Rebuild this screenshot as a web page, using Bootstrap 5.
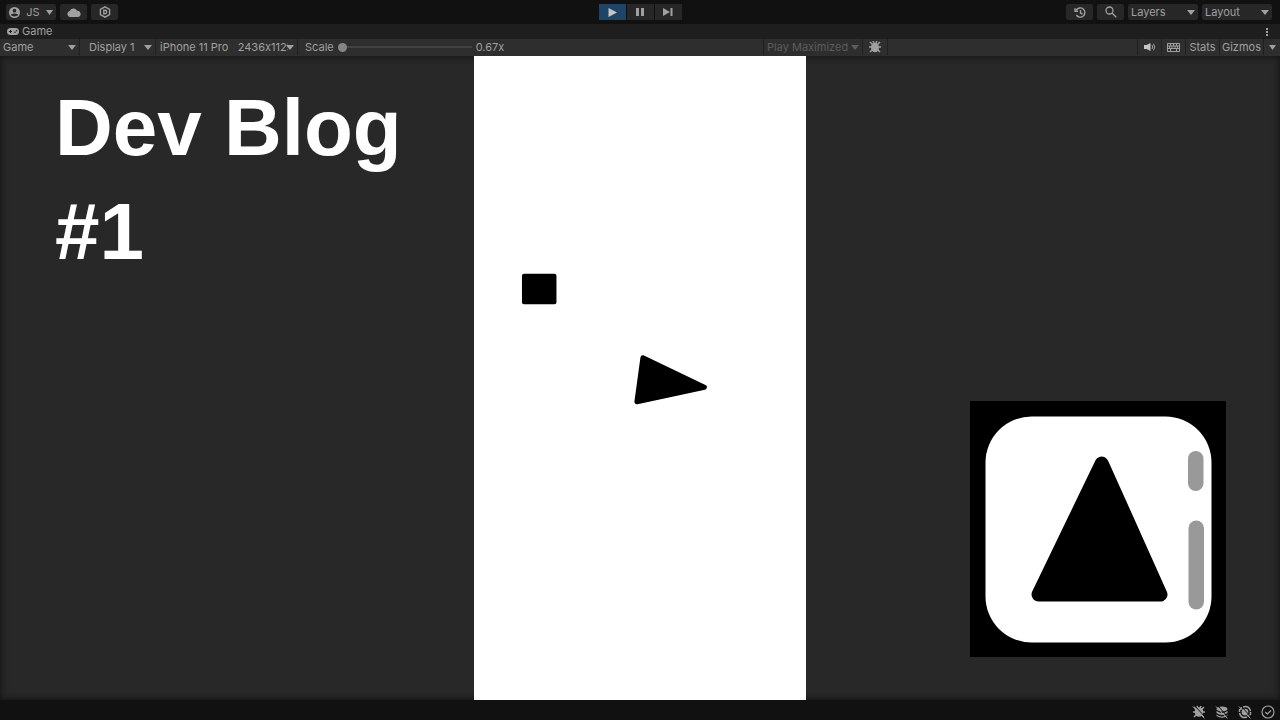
<!DOCTYPE html>
<html lang="en" data-bs-theme="dark">
<head>
<meta charset="utf-8">
<meta name="viewport" content="width=device-width, initial-scale=1">
<title>Dev Blog #1</title>
<link href="https://cdn.jsdelivr.net/npm/bootstrap@5.3.0/dist/css/bootstrap.min.css" rel="stylesheet">
<style>
  :root { --ink: #a0a0a0; --panel: #2e2e2e; --line: #202020; }
  body { font-family: Inter, "Liberation Sans", sans-serif; font-size: 11px; font-variant-ligatures: no-contextual; line-height: 16px; color: var(--ink); background: #111; }
  svg { display: block; }
  .topbar { display: grid; grid-template-columns: 1fr auto 1fr; height: 24px; padding: 0 8px 0 6px; background: #111; }
  .tool { display: flex; align-items: center; justify-content: center; height: 16px; width: 27px; padding: 0; border: 0; border-radius: 2px; background: #272727; color: var(--ink); font-size: 11px; line-height: 16px; }
  .tool:hover { background: #3a3a3a; color: #ddd; }
  .tool.account { width: 50px; gap: 6px; }
  .playback { gap: 1px; padding-left: 2px; }
  .playback .tool { border-radius: 0; }
  .playback .tool.running { background: #1f4466; color: #c4c4c4; }
  .pick { appearance: none; height: 16px; border: 0; border-radius: 2px; color: var(--ink); font: inherit; font-variant-ligatures: no-contextual; line-height: 16px; padding: 0 14px 0 3px;
    background: #272727 url("data:image/svg+xml,%3Csvg xmlns='http://www.w3.org/2000/svg' width='8' height='5'%3E%3Cpath d='M0 0h8L4 5z' fill='%23a0a0a0'/%3E%3C/svg%3E") no-repeat right 3px center; }
  .topbar .pick { width: 70px; }
  .tabs { height: 15px; background: #1e1e1e; }
  .tabs .title { line-height: 15px; gap: 3px; padding-left: 7px; }
  .bare { border: 0; background: none; color: inherit; padding: 0; font: inherit; }
  .gamebar { height: 17px; padding-bottom: 1px; background: var(--panel); }
  .gamebar > *, .gamebar .cell { height: 16px; }
  .gamebar .pick { background-color: var(--panel); border-radius: 0; border-right: 1px solid var(--line); }
  .gamebar .pick.muted { border-left: 1px solid var(--line); width: 100px; color: #5c5c5c; opacity: 1;
    background-image: url("data:image/svg+xml,%3Csvg xmlns='http://www.w3.org/2000/svg' width='8' height='5'%3E%3Cpath d='M0 0h8L4 5z' fill='%235c5c5c'/%3E%3C/svg%3E"); }
  .gamebar .w-view { width: 80px; }
  .gamebar .w-display { width: 76px; padding-left: 9px; }
  .gamebar .w-device { width: 142px; padding-left: 4px; padding-right: 9px; background-position-x: right 2px; }
  .zoomer { width: 216px; padding-left: 7px; }
  .zoomer input { appearance: none; width: 134px; height: 10px; margin: 0 4px; background: linear-gradient(#424242, #424242) center / 100% 2px no-repeat; }
  .zoomer input::-webkit-slider-thumb { appearance: none; width: 9px; height: 9px; border-radius: 50%; background: #858585; }
  .zoomer input::-moz-range-thumb { width: 9px; height: 9px; border: 0; border-radius: 50%; background: #858585; }
  .cell { display: flex; align-items: center; justify-content: center; border-left: 1px solid var(--line); }
  .w-icon { width: 24px; } .w-stats { width: 34px; } .w-gizmos { width: 44px; } .w-caret { width: 17px; }
  .stage { display: grid; grid-template-columns: 37fr 26fr 37fr; background: #282828; box-shadow: inset 0 0 6px 1px #141414; }
  .headline { font: bold 80px/104px "Liberation Sans", Arial, sans-serif; color: #fff; padding: 20px 0 0 55px; margin: 0; }
  .screen { background: #fff; }
  .screen svg { width: 100%; height: auto; }
  .app-logo { width: 256px; margin: 0 54px 43px 0; }
  .status { height: 20px; padding: 3px 5px 0 0; gap: 9px; background: #111; }
</style>
</head>
<body class="d-flex flex-column min-vh-100">

<header class="topbar align-items-center">
  <div class="d-flex gap-1">
    <button class="tool account" type="button">
      <svg width="11" height="11" viewBox="0 0 12 12"><circle cx="6" cy="6" r="6" fill="currentColor"/><circle cx="6" cy="4" r="2" fill="#272727"/><path d="M2 9q0-2 4-2t4 2q-4 2.500-8 0z" fill="#272727"/></svg>
      <span>JS</span>
      <svg width="7" height="5" viewBox="0 0 7 5"><path d="M0 0h7L3.500 5z" fill="currentColor"/></svg>
    </button>
    <button class="tool" type="button" aria-label="Cloud"><svg width="14" height="9" viewBox="0 0 14 9"><path d="M3 9a3 3 0 0 1-.3-5.900A3.900 3.900 0 0 1 10 2.800 3.100 3.100 0 0 1 11 9z" fill="currentColor"/></svg></button>
    <button class="tool" type="button" aria-label="Services"><svg width="12" height="12" viewBox="0 0 12 12" fill="none" stroke="currentColor" stroke-width="1.400"><path d="M6 .8l4.600 2.600v5.200L6 11.200 1.400 8.600V3.400z"/><path d="M4.800 4.300h1.200a1.700 1.700 0 0 1 0 3.400H4.800z"/></svg></button>
  </div>
  <div class="d-flex playback">
    <button class="tool running" type="button" aria-label="Play"><svg width="9" height="9" viewBox="0 0 9 9"><path d="M.5 0L9 4.500.5 9z" fill="currentColor"/></svg></button>
    <button class="tool" type="button" aria-label="Pause"><svg width="8" height="8" viewBox="0 0 8 8"><path d="M0 0h3v8H0zM5 0h3v8H5z" fill="currentColor"/></svg></button>
    <button class="tool" type="button" aria-label="Step"><svg width="10" height="8" viewBox="0 0 10 8"><path d="M0 0l7 4-7 4zM7.500 0h2v8h-2z" fill="currentColor"/></svg></button>
  </div>
  <div class="d-flex gap-1 justify-content-end">
    <button class="tool" type="button" aria-label="Undo history"><svg width="12" height="11" viewBox="0 0 12 11" fill="none" stroke="currentColor" stroke-width="1.400"><path d="M2.300 3.200A4.600 4.600 0 1 1 2.400 8M1 1.200v3h3M6.500 3v3l2 1"/></svg></button>
    <button class="tool" type="button" aria-label="Search"><svg width="12" height="12" viewBox="0 0 12 12" fill="none" stroke="currentColor" stroke-width="1.300"><circle cx="4.500" cy="4.500" r="3.500"/><path d="M7 7l4.300 4.300"/></svg></button>
    <select class="pick" aria-label="Layers"><option>Layers</option></select>
    <select class="pick" aria-label="Layout"><option>Layout</option></select>
  </div>
</header>

<div class="tabs d-flex align-items-center">
  <button class="bare title d-flex align-items-center" type="button">
    <svg width="12" height="7" viewBox="0 0 12 7"><rect width="12" height="7" rx="3.500" fill="currentColor"/><path d="M3.500 2v3M2 3.500h3" stroke="#1e1e1e"/><circle cx="8" cy="4.300" r=".8" fill="#1e1e1e"/><circle cx="9.500" cy="2.700" r=".8" fill="#1e1e1e"/></svg>
    <span>Game</span>
  </button>
  <button class="bare ms-auto pe-2 me-1" type="button" aria-label="Tab menu"><svg width="2" height="8" viewBox="0 0 2 8"><path d="M0 0h2v2H0zM0 3h2v2H0zM0 6h2v2H0z" fill="currentColor"/></svg></button>
</div>

<div class="gamebar d-flex align-items-center">
  <select class="pick w-view" aria-label="View"><option>Game</option></select>
  <select class="pick w-display" aria-label="Display"><option>Display 1</option></select>
  <select class="pick w-device" aria-label="Resolution"><option>iPhone 11 Pro&nbsp;&nbsp; 2436x1125</option></select>
  <div class="zoomer d-flex align-items-center">
    <label for="scale">Scale</label>
    <input id="scale" type="range" min="0" max="100" value="0">
    <output for="scale">0.67x</output>
  </div>
  <div class="d-flex mx-auto">
    <select class="pick muted" aria-label="Play mode" disabled><option>Play Maximized</option></select>
    <button class="bare cell border-start-0 w-icon" type="button" aria-label="Frame debugger"><svg width="12" height="12" viewBox="0 0 12 12"><path d="M1 1l3 3M11 1L8 4M0 6h12M1 11l3-3M11 11L8 8M4 0l1 2M8 0L7 2" stroke="currentColor" stroke-width="1.500"/><ellipse cx="6" cy="6.500" rx="4" ry="4.800" fill="currentColor"/></svg></button>
    <span class="cell" aria-hidden="true"></span>
  </div>
  <div class="d-flex">
    <button class="bare cell w-icon" type="button" aria-label="Mute audio"><svg width="12" height="8" viewBox="0 0 12 8"><path d="M0 2h2.500v4H0zM2.500 2L6.500 0v8L2.500 6z" fill="#c4c4c4"/><path d="M8 2q1.500 2 0 4M9.500 .7q2.500 3.300 0 6.600" fill="none" stroke="currentColor"/></svg></button>
    <button class="bare cell w-icon" type="button" aria-label="Shortcuts"><svg width="13" height="9" viewBox="0 0 13 9" fill="none" stroke="currentColor"><path d="M.5.5h12v8H.5zM.5 3h12M.5 5.500h12M3.500 1v2M6.500 1v2M9.500 1v2M2.500 3v2.500M5 3v2.500M8 3v2.500M10.500 3v2.500M3.500 5.500v3M9.500 5.500v3"/></svg></button>
    <button class="bare cell w-stats" type="button">Stats</button>
    <button class="bare cell w-gizmos" type="button">Gizmos</button>
    <button class="bare cell w-caret" type="button" aria-label="Gizmo options"><svg width="7" height="5" viewBox="0 0 7 5"><path d="M0 0h7L3.500 5z" fill="currentColor"/></svg></button>
  </div>
</div>

<main class="stage flex-grow-1">
  <h1 class="headline">Dev Blog<br>#1</h1>
  <div class="screen">
    <svg viewBox="0 0 333 644" role="img" aria-label="Game view">
      <rect x="48" y="218" width="34.500" height="30.500" rx="2"/>
      <path d="M169 302L230.500 331.500 163 346z" stroke="#000" stroke-width="5" stroke-linejoin="round"/>
    </svg>
  </div>
  <div class="d-flex align-items-end justify-content-end">
    <svg class="app-logo" viewBox="0 0 256 256" role="img" aria-label="App logo">
      <path d="M0 0h256v256H0z"/>
      <rect x="15.500" y="15.500" width="226" height="226" rx="46" fill="#fff"/>
      <path d="M131.700 62.500L190.500 193.500H68.500z" stroke="#000" stroke-width="14" stroke-linejoin="round"/>
      <rect x="218" y="50" width="15.500" height="40" rx="7.700" fill="#999"/>
      <rect x="218.500" y="119.500" width="15.500" height="89" rx="7.700" fill="#999"/>
    </svg>
  </div>
</main>

<footer class="status d-flex align-items-center justify-content-end">
  <svg width="14" height="14" viewBox="0 0 14 14"><path d="M2 2l3 3M12 2L9 5M1 7h12M2 12l3-3M12 12L9 9M5 1l1 2M9 1L8 3" stroke="currentColor" stroke-width="1.500"/><ellipse cx="7" cy="7" rx="4.300" ry="4.800" fill="currentColor"/><path d="M3 1l10.500 11.500" stroke="#111"/><path d="M1 1.500l11.500 12" stroke="currentColor"/></svg>
  <svg width="14" height="14" viewBox="0 0 14 14"><ellipse cx="7" cy="4" rx="5.500" ry="2.500" fill="currentColor"/><path d="M1.500 6q5.500 4 11 0v2q-5.500 4-11 0zM1.500 9.500q5.500 4 11 0V11q-5.500 3.500-11 0z" fill="currentColor"/><path d="M3 1l10.500 11.500" stroke="#111"/><path d="M1 1.500l11.500 12" stroke="currentColor"/></svg>
  <svg width="14" height="14" viewBox="0 0 14 14" fill="none" stroke="currentColor" stroke-width="1.500"><path d="M5 2q6-2 7.500 4M9 12q-6 2-7.500-4M4 2.200L1.500 5v2M10 11.800L12.500 9V7"/><circle cx="7" cy="7" r="2.600" fill="currentColor"/><path d="M3 1l10.500 11.500" stroke="#111" stroke-width="1"/><path d="M1 1.500l11.500 12" stroke-width="1"/></svg>
  <svg width="14" height="14" viewBox="0 0 14 14" fill="none" stroke="currentColor" stroke-width="1.200"><circle cx="7" cy="7" r="6"/><path d="M4.200 7l2.200 2 3.600-3.500"/></svg>
</footer>

<script src="https://cdn.jsdelivr.net/npm/bootstrap@5.3.0/dist/js/bootstrap.bundle.min.js"></script>
</body>
</html>
